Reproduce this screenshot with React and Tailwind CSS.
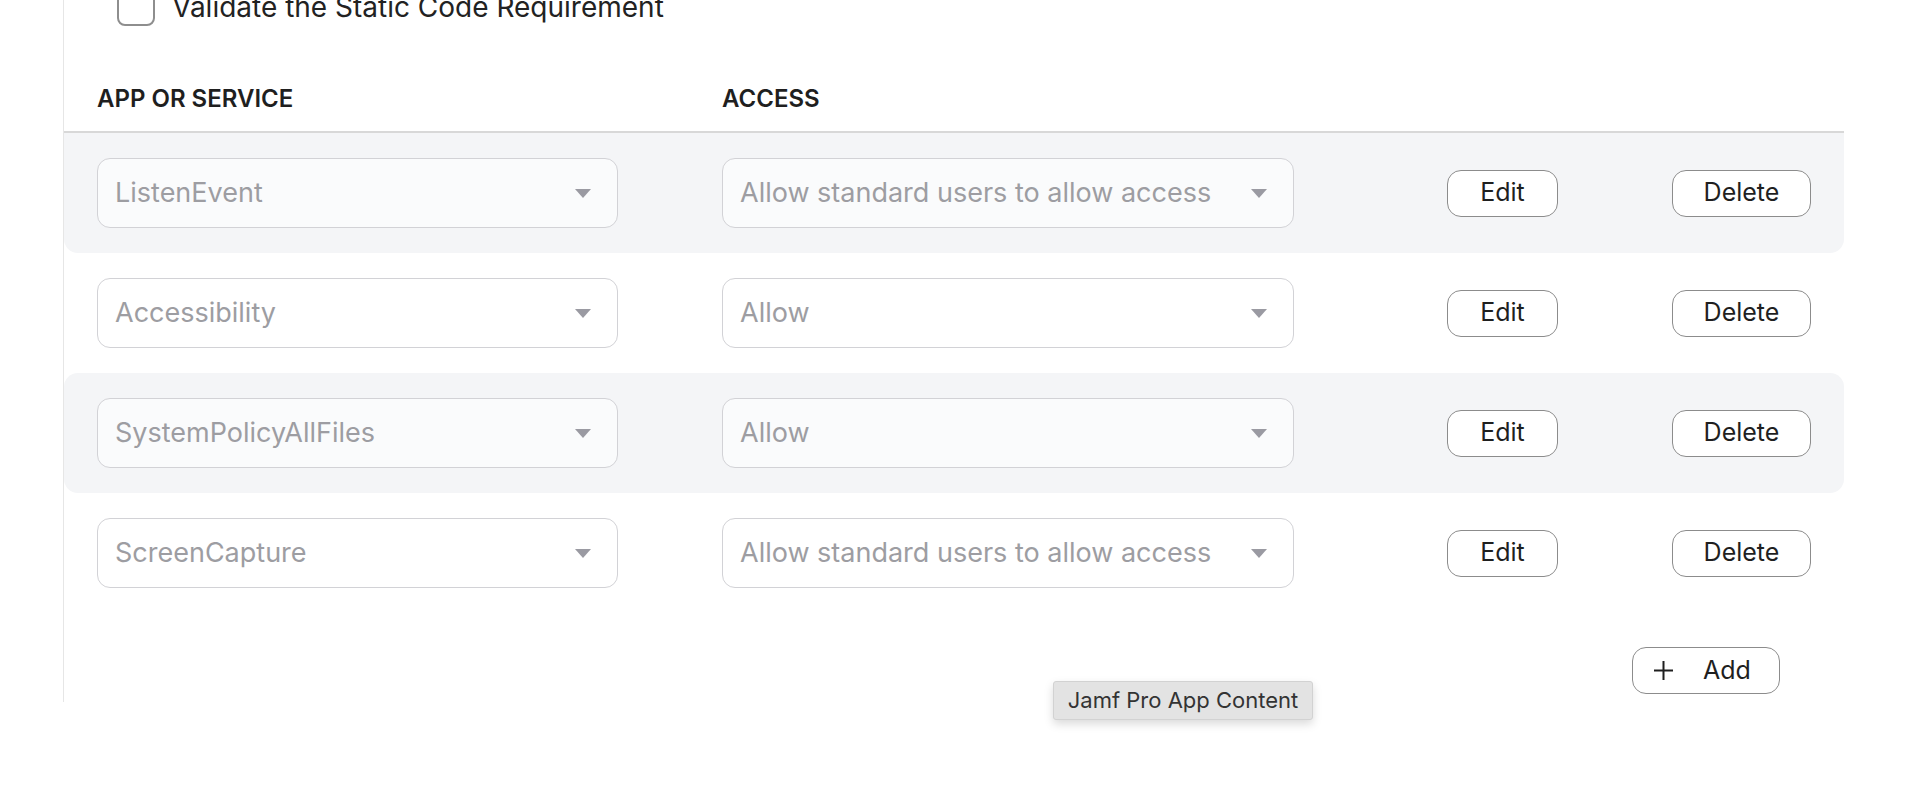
import React from 'react';

const ROWS = [
  { service: 'ListenEvent', access: 'Allow standard users to allow access', shaded: true },
  { service: 'Accessibility', access: 'Allow', shaded: false },
  { service: 'SystemPolicyAllFiles', access: 'Allow', shaded: true },
  { service: 'ScreenCapture', access: 'Allow standard users to allow access', shaded: false },
];

function Caret() {
  return (
    <svg width="16" height="9" viewBox="0 0 16 9" className="shrink-0">
      <path d="M0 0 H16 L8 9 Z" fill="#9a9aa2" />
    </svg>
  );
}

function Select({ value, width, shaded }) {
  return (
    <div
      className={`flex items-center justify-between h-[70px] pl-[17px] pr-[26px] rounded-[13px] border-[1.5px] border-[#d2d2d6] ${width} ${shaded ? 'bg-[#fafbfc]' : 'bg-white'}`}
    >
      <span className="text-[27px] text-[#9d9da2] truncate">{value}</span>
      <Caret />
    </div>
  );
}

function Button({ children, className = '' }) {
  return (
    <button
      className={`h-[47px] rounded-[14px] border-[1.5px] border-[#8c8c8c] bg-white text-[25px] text-[#1f1f1f] flex items-center justify-center ${className}`}
    >
      {children}
    </button>
  );
}

export default function App() {
  return (
    <div
      className="relative w-[1920px] h-[790px] bg-white overflow-hidden"
      style={{ fontFamily: 'Inter, "Noto Sans", sans-serif' }}
    >
      <div className="ml-[63px] w-[1781px] h-[702px] border-l-[1.5px] border-[#e6e6e6] flex flex-col">
        {/* checkbox */}
        <div className="-mt-[12px] ml-[53px] flex items-center gap-[17px]">
          <div className="w-[38px] h-[38px] shrink-0 rounded-[8px] border-2 border-[#8e8e8e] bg-white" />
          <span className="text-[28px] leading-[34px] text-[#222]">Validate the Static Code Requirement</span>
        </div>

        {/* header */}
        <div className="mt-[58px] flex items-center pl-[33px] pb-[17px] border-b-2 border-[#d8d8d8]">
          <div className="w-[625px] text-[24px] leading-[30px] font-semibold text-[#1f1f1f]">APP OR SERVICE</div>
          <div className="text-[24px] leading-[30px] font-semibold text-[#1f1f1f]">ACCESS</div>
        </div>

        {/* rows */}
        <div className="flex flex-col">
          {ROWS.map((r, i) => (
            <div
              key={i}
              className={`h-[120px] flex items-center pl-[33px] rounded-[14px] ${r.shaded ? 'bg-[#f4f5f7]' : ''} ${i === 0 ? 'rounded-t-none' : ''}`}
            >
              <Select value={r.service} width="w-[521px]" shaded={r.shaded} />
              <div className="ml-[104px]">
                <Select value={r.access} width="w-[572px]" shaded={r.shaded} />
              </div>
              <Button className="ml-[153px] w-[111px]">Edit</Button>
              <Button className="ml-[114px] w-[139px]">Delete</Button>
            </div>
          ))}
        </div>

        {/* add */}
        <div className="mt-[34px] flex justify-end pr-[64px]">
          <Button className="w-[148px] !justify-start pl-[21px] gap-[30px]">
            <svg width="19" height="19" viewBox="0 0 19 19">
              <path d="M9.5 0 V19 M0 9.5 H19" stroke="#1f1f1f" strokeWidth="2" />
            </svg>
            <span>Add</span>
          </Button>
        </div>
      </div>

      {/* tooltip */}
      <div className="absolute left-[1053px] top-[681px] w-[260px] h-[39px] flex items-center justify-center bg-[#e3e3e3] border border-[#d2d2d2] rounded-[3px] shadow-[0_4px_10px_rgba(0,0,0,0.15)] text-[22px] text-[#333]">
        Jamf Pro App Content
      </div>
    </div>
  );
}
